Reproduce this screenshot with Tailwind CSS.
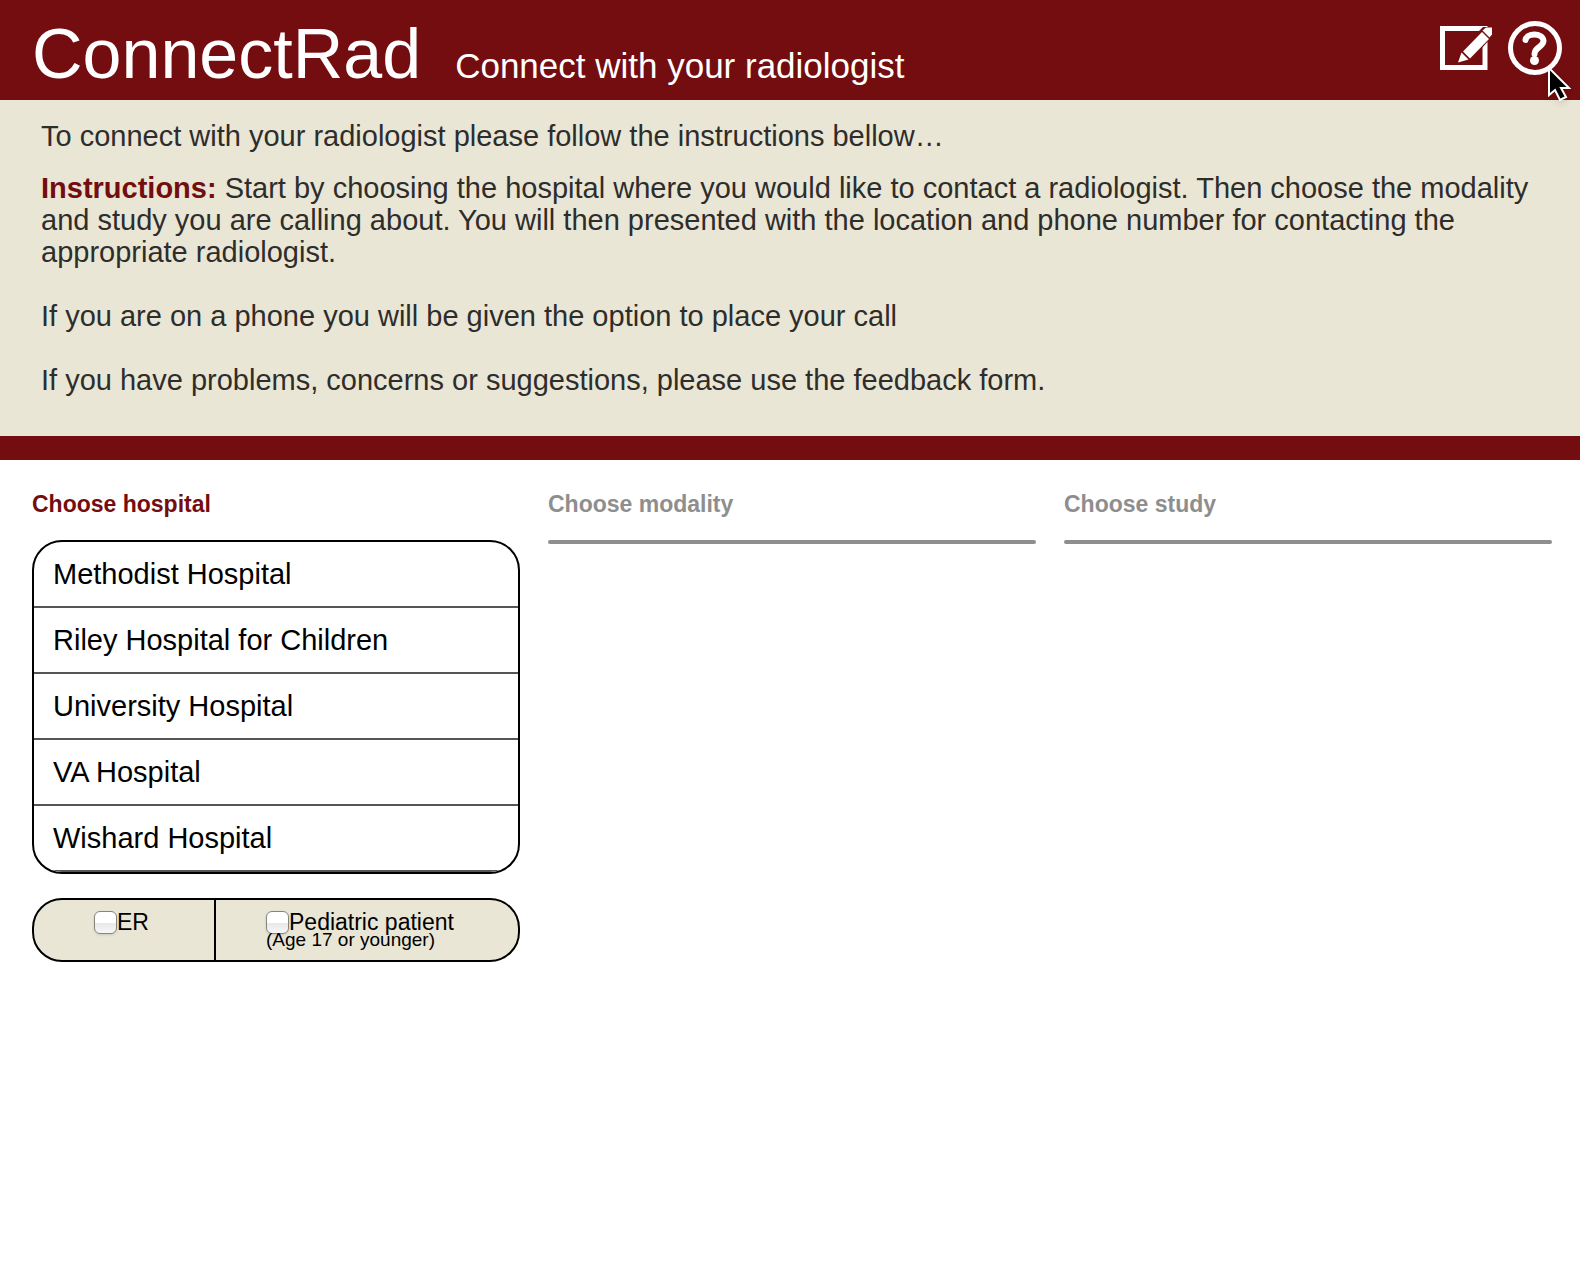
<!DOCTYPE html>
<html lang="en">
<head>
<meta charset="utf-8">
<meta name="viewport" content="width=device-width, initial-scale=1">
<title>ConnectRad</title>
<script src="https://cdn.jsdelivr.net/npm/@tailwindcss/browser@4"></script>
</head>
<body class="min-h-screen bg-white font-['Liberation_Sans',Arial,sans-serif] text-black">
<header class="relative flex h-[100px] items-start justify-between bg-[#730d0f] pr-4 pl-8 text-white">
  <div class="flex items-baseline gap-[34px] pt-4">
    <h1 class="text-[70px] leading-[76px]">ConnectRad</h1>
    <p class="text-[35px]">Connect with your radiologist</p>
  </div>
  <nav class="flex gap-4 pt-5">
    <a href="#feedback" aria-label="Feedback form" class="block">
      <svg class="h-14 w-14" viewBox="0 0 56 56" fill="none">
        <rect x="6.500" y="8.500" width="42.500" height="39" stroke="#fff" stroke-width="5"/>
        <path d="M21 44L24 30L47 7H56V17L34 41Z" fill="#730d0f"/>
        <path d="M22 42.500L25.500 32.500L32.500 39.500Z" fill="#fff"/>
        <path d="M27 31.500L46 12L53 19L34 38.500Z" fill="#fff"/>
        <path d="M46.500 10.500L50 7.500H56V14.500L53.500 17.500Z" fill="#fff"/>
      </svg>
    </a>
    <a href="#help" aria-label="Help" class="block">
      <svg class="h-14 w-14" viewBox="0 0 56 56" fill="none">
        <circle cx="27" cy="28" r="24.500" stroke="#fff" stroke-width="5"/>
        <path d="M17.500 20C18.500 12.500 34.500 12.500 35.500 20.500C36 27 26.500 27 26.500 34" stroke="#fff" stroke-width="6" stroke-linecap="round"/>
        <circle cx="26.500" cy="40.500" r="4.500" fill="#fff"/>
      </svg>
    </a>
  </nav>
  <svg class="absolute top-[66px] right-2 h-9 w-6 drop-shadow-md" viewBox="0 0 24 36" aria-hidden="true">
    <path d="M1 2V29L7 24L12 34L18 31L13 22H21Z" fill="#000" stroke="#fff" stroke-width="2"/>
  </svg>
</header>
<section class="border-b-[24px] border-[#730d0f] bg-[#e9e6d5] px-[41px] pt-5 pb-10 text-[29px] leading-8 text-[#2e2d2b]">
  <p>To connect with your radiologist please follow the instructions bellow…</p>
  <p class="mt-5"><strong class="text-[#730d0f]">Instructions:</strong> Start by choosing the hospital where you would like to contact a radiologist. Then choose the modality and study you are calling about. You will then presented with the location and phone number for contacting the appropriate radiologist.</p>
  <p class="mt-8">If you are on a phone you will be given the option to place your call</p>
  <p class="mt-8">If you have problems, concerns or suggestions, please use the feedback form.</p>
</section>
<main class="grid grid-cols-3 gap-7 pt-7 pr-7 pl-8">
  <section>
    <h2 class="text-[23px] leading-8 font-bold text-[#730d0f]">Choose hospital</h2>
    <ul class="mt-5 overflow-hidden rounded-[30px] border-2 border-black text-[29px]">
      <li><button type="button" class="block h-[66px] w-full border-b-2 border-[#555] px-[19px] pt-0.5 text-left">Methodist Hospital</button></li>
      <li><button type="button" class="block h-[66px] w-full border-b-2 border-[#555] px-[19px] pt-0.5 text-left">Riley Hospital for Children</button></li>
      <li><button type="button" class="block h-[66px] w-full border-b-2 border-[#555] px-[19px] pt-0.5 text-left">University Hospital</button></li>
      <li><button type="button" class="block h-[66px] w-full border-b-2 border-[#555] px-[19px] pt-0.5 text-left">VA Hospital</button></li>
      <li><button type="button" class="block h-[66px] w-full border-b-2 border-[#555] px-[19px] pt-0.5 text-left">Wishard Hospital</button></li>
    </ul>
    <div class="mt-6 flex h-16 rounded-[30px] border-2 border-black bg-[#e9e6d5] text-[23px]">
      <div class="w-[182px] border-r-2 border-black pt-[11px] pl-[60px]">
        <label class="flex h-[22px] items-center leading-[22px]"><input type="checkbox" class="h-[23px] w-[23px] appearance-none rounded-md border border-[#85857c] bg-linear-to-b from-white from-50% via-[#e8e8e8] via-55% to-[#f8f8f8] shadow-sm">ER</label>
      </div>
      <div class="flex-1 pt-[11px] pl-[50px]">
        <label class="flex h-[22px] items-center leading-[22px]"><input type="checkbox" class="h-[23px] w-[23px] appearance-none rounded-md border border-[#85857c] bg-linear-to-b from-white from-50% via-[#e8e8e8] via-55% to-[#f8f8f8] shadow-sm" aria-describedby="age">Pediatric patient</label>
        <p id="age" class="relative text-[19px] leading-[14px]">(Age 17 or younger)</p>
      </div>
    </div>
  </section>
  <section>
    <h2 class="text-[23px] leading-8 font-bold text-[#8e8e8e]">Choose modality</h2>
    <div class="mt-5 h-1 rounded-xs bg-[#8e8e8e]"></div>
  </section>
  <section>
    <h2 class="text-[23px] leading-8 font-bold text-[#8e8e8e]">Choose study</h2>
    <div class="mt-5 h-1 rounded-xs bg-[#8e8e8e]"></div>
  </section>
</main>
</body>
</html>
